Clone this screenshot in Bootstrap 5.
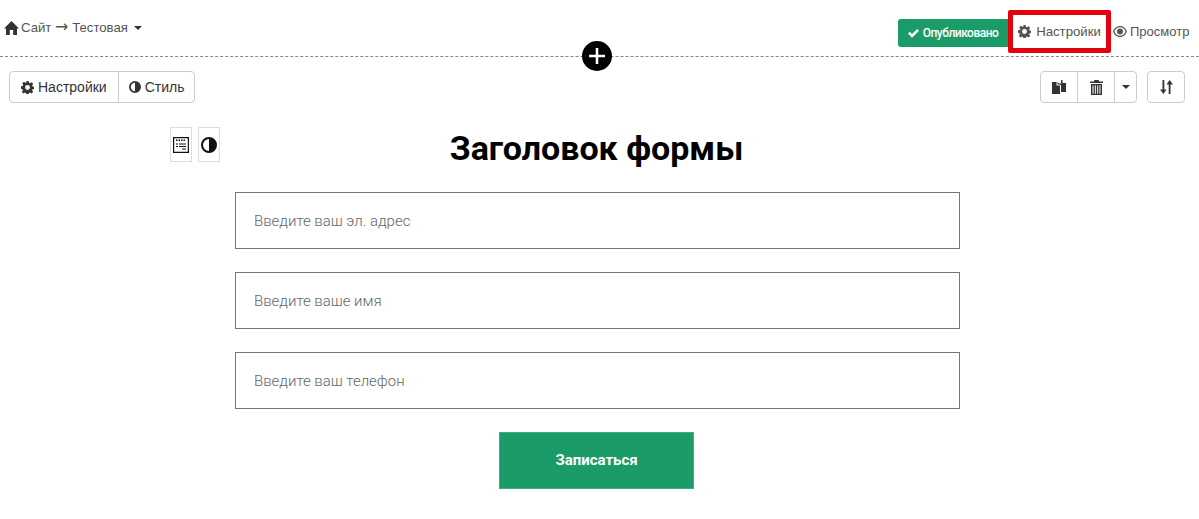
<!DOCTYPE html>
<html lang="ru">
<head>
    <meta charset="UTF-8">
    <title>Форма - Настройки</title>
    <link rel="stylesheet" href="https://cdn.jsdelivr.net/npm/bootstrap@5.3.0/dist/css/bootstrap.min.css">
    <style>
        body { font-family: "Liberation Sans", Arial, sans-serif; color: #333; background: #fff; overflow: hidden; }
        svg { display: block; flex: none; fill: currentColor; }
        .top-bar { height: 57px; border-bottom: 1px dashed #888; padding: 0 10px 0 4px; }
        .crumb { font-size: 13.2px; color: #555; padding-top: 18px; height: 37px; gap: 2px; }
        .crumb svg { color: #333; }
        .crumb-arrow { font-family: "DejaVu Sans", sans-serif; font-size: 16px; line-height: 1; }
        .caret-down { width: 0; height: 0; border-left: 4px solid transparent; border-right: 4px solid transparent; border-top: 4px solid #333; }
        .status-btn { background: #1b9b68; color: #fff; font-family: Roboto, sans-serif; font-size: 12px; font-weight: 500; letter-spacing: -.5px; height: 28px; border-radius: 3px 0 0 3px; width: 110px; margin-top: 19px; }
        .red-frame { border: 5px solid #e3000f; border-radius: 2px; width: 103px; height: 43px; font-size: 13.2px; color: #555; margin-top: 10px; gap: 5px; }
        .red-frame svg, .view-link svg { color: #555; }
        .view-link { font-size: 13px; color: #555; margin: 10px 0 0 2px; height: 43px; width: 76px; gap: 3px; }
        .add-btn { width: 30px; height: 30px; background: #000; color: #fff; left: 582px; top: 41px; }
        .tool-row { padding: 14px 14px 0 9px; }
        .tool-btn { background: #fff; border: 1px solid #ccc; border-radius: 4px; color: #333; font-size: 14px; height: 32px; padding: 0 11px; }
        .tool-btn:hover { background: #f5f5f5; }
        .style-btn { padding: 0 10px; }
        .icon-btn { width: 38px; padding: 0; }
        .caret-btn { width: 23px; padding: 0; }
        .right-tools { gap: 10px; }
        .form-area { width: 725px; margin: 0 auto; padding-top: 23px; transform: translateX(-2px); }
        .side-tools { left: -65px; top: 24px; gap: 6px; }
        .side-btn { width: 22px; height: 35px; background: #fff; border: 1px solid #ddd; color: #111; }
        .form-title { font-family: Roboto, sans-serif; font-weight: 700; font-size: 34px; color: #000; line-height: 44px; margin: 0 0 22px; padding-right: 2px; }
        .field { height: 57px; border: 1px solid #777; border-radius: 0; font-family: Roboto, sans-serif; font-weight: 300; font-size: 15px; padding: 0 18px; margin-bottom: 23px; }
        .field::placeholder { color: #666; }
        .submit-btn { display: block; width: 195px; height: 57px; margin-left: 264px; background: #1b9b68; border: 1px solid #3fae82; border-radius: 0; color: #fff; font-family: Roboto, sans-serif; font-weight: 700; font-size: 15px; }
        .submit-btn:hover { background: #178a5c; color: #fff; }
    </style>
</head>
<body>
<div class="top-bar d-flex justify-content-between align-items-start">
    <div class="crumb d-flex align-items-center">
        <svg width="15" height="14" viewBox="0 0 15 14"><path d="M7.500 0 L15 7.500 H13 V14 H9.200 V9 H5.800 V14 H2 V7.500 H0 Z"/></svg>
        <span>Сайт <span class="crumb-arrow">→</span> Тестовая</span>
        <span class="caret-down ms-1"></span>
    </div>
    <div class="d-flex align-items-start">
        <div class="status-btn d-flex align-items-center justify-content-center gap-1">
            <svg width="11" height="9" viewBox="0 0 11 9"><path d="M0 4.500 L1.800 2.800 L4 5 L9.200 0 L11 1.800 L4 8.800 Z"/></svg>
            <span>Опубликовано</span>
        </div>
        <div class="red-frame d-flex align-items-center justify-content-center">
            <svg width="13" height="13" viewBox="0 0 16 16"><path fill-rule="evenodd" d="M6.600 0h2.800l.4 2.200 1.300.6 1.900-1.300 2 2-1.300 1.900.6 1.300 2.200.4v2.800l-2.200.4-.6 1.300 1.300 1.900-2 2-1.900-1.300-1.300.6-.4 2.200H6.600l-.4-2.200-1.300-.6-1.900 1.300-2-2 1.300-1.900-.6-1.300L0 9.400V6.600l2.200-.4.6-1.300L1.500 3l2-2 1.900 1.300 1.300-.6zM8 5a3 3 0 1 0 0 6 3 3 0 0 0 0-6z"/></svg>
            <span>Настройки</span>
        </div>
        <div class="view-link d-flex align-items-center">
            <svg width="14" height="11" viewBox="0 0 14 11"><path fill-rule="evenodd" d="M7 0C3.500 0 1 2.500 0 5.500 1 8.500 3.500 11 7 11s6-2.500 7-5.500C13 2.500 10.500 0 7 0zm0 1.200c2.700 0 4.700 1.900 5.600 4.300-.9 2.400-2.900 4.300-5.600 4.300S2.300 7.900 1.400 5.500C2.300 3.100 4.300 1.200 7 1.200zM7 2.500a3 3 0 1 0 0 6 3 3 0 0 0 0-6z"/></svg>
            <span>Просмотр</span>
        </div>
    </div>
</div>
<div class="add-btn position-absolute rounded-circle d-flex align-items-center justify-content-center">
    <svg width="16" height="16" viewBox="0 0 16 16"><path d="M6.700 0h2.600v6.700H16v2.600H9.300V16H6.700V9.300H0V6.700h6.700z"/></svg>
</div>

<div class="tool-row d-flex justify-content-between">
    <div class="btn-group">
        <button type="button" class="btn tool-btn d-flex align-items-center gap-1">
            <svg width="13" height="13" viewBox="0 0 16 16"><path fill-rule="evenodd" d="M6.600 0h2.800l.4 2.200 1.300.6 1.900-1.300 2 2-1.300 1.900.6 1.300 2.200.4v2.800l-2.200.4-.6 1.300 1.300 1.900-2 2-1.900-1.300-1.300.6-.4 2.200H6.600l-.4-2.200-1.300-.6-1.900 1.300-2-2 1.300-1.900-.6-1.300L0 9.400V6.600l2.200-.4.6-1.300L1.500 3l2-2 1.900 1.300 1.300-.6zM8 5a3 3 0 1 0 0 6 3 3 0 0 0 0-6z"/></svg>
            <span>Настройки</span>
        </button>
        <button type="button" class="btn tool-btn style-btn d-flex align-items-center gap-1">
            <svg width="12" height="12" viewBox="0 0 12 12"><path fill-rule="evenodd" d="M6 0a6 6 0 1 0 0 12A6 6 0 0 0 6 0zm0 1.800v8.400a4.200 4.200 0 0 1 0-8.400z"/></svg>
            <span>Стиль</span>
        </button>
    </div>
    <div class="right-tools d-flex">
        <div class="btn-group">
            <button type="button" class="btn tool-btn icon-btn d-flex align-items-center justify-content-center" aria-label="Копировать">
                <svg width="14" height="14" viewBox="0 0 14 14"><path d="M0 2h4.500v3.500H8V14H0zM5.500 2l2.500 2.500H5.500zM9 0h1.500v3H14v9H9V5.500L7 3.500H9z"/></svg>
            </button>
            <button type="button" class="btn tool-btn icon-btn d-flex align-items-center justify-content-center" aria-label="Удалить">
                <svg width="13" height="15" viewBox="0 0 13 15"><path fill-rule="evenodd" d="M4.500 0h4l.6 1.500H13V3H0V1.500h3.900zM1 4h11v11H1zM2.500 5.200v8.600h1V5.200zm2.300 0v8.600h1V5.200zm2.400 0v8.600h1V5.200zm2.300 0v8.600h1V5.200z"/></svg>
            </button>
            <button type="button" class="btn tool-btn caret-btn d-flex align-items-center justify-content-center" aria-label="Ещё"><span class="caret-down d-block"></span></button>
        </div>
        <button type="button" class="btn tool-btn icon-btn d-flex align-items-center justify-content-center" aria-label="Сортировка">
            <svg width="13" height="14" viewBox="0 0 13 14"><path d="M2.500 0h1.800v9.500H6.500L3.400 14 0 9.500h2.500zM8.700 14V4.500H6.500L9.600 0 13 4.500h-2.500V14z"/></svg>
        </button>
    </div>
</div>

<div class="form-area position-relative">
    <div class="side-tools position-absolute d-flex">
        <div class="side-btn d-flex align-items-center justify-content-center">
            <svg width="16" height="16" viewBox="0 0 16 16"><path fill-rule="evenodd" d="M0 0h16v16H0zm1.200 1.200v13.600h13.600V1.200zM3 2.500h1.500v1.500H3zm2.500 0H7v1.500H5.500zm2.500 0h1.500v1.500H8zm2.500 0H12v1.500h-1.500zM3 6.500h2v1H3zm3 0h7v1H6zM3 9h2v1H3zm3 0h7v1H6zm3 2.500h4v1H9z"/></svg>
        </div>
        <div class="side-btn d-flex align-items-center justify-content-center">
            <svg width="16" height="16" viewBox="0 0 16 16"><path fill-rule="evenodd" d="M8 0a8 8 0 1 0 0 16A8 8 0 0 0 8 0zm0 2v12a6 6 0 0 1 0-12z"/></svg>
        </div>
    </div>
    <h1 class="form-title text-center">Заголовок формы</h1>
    <form>
        <input type="email" class="form-control field" placeholder="Введите ваш эл. адрес">
        <input type="text" class="form-control field" placeholder="Введите ваше имя">
        <input type="tel" class="form-control field" placeholder="Введите ваш телефон">
        <button type="button" class="btn submit-btn">Записаться</button>
    </form>
</div>
</body>
</html>
